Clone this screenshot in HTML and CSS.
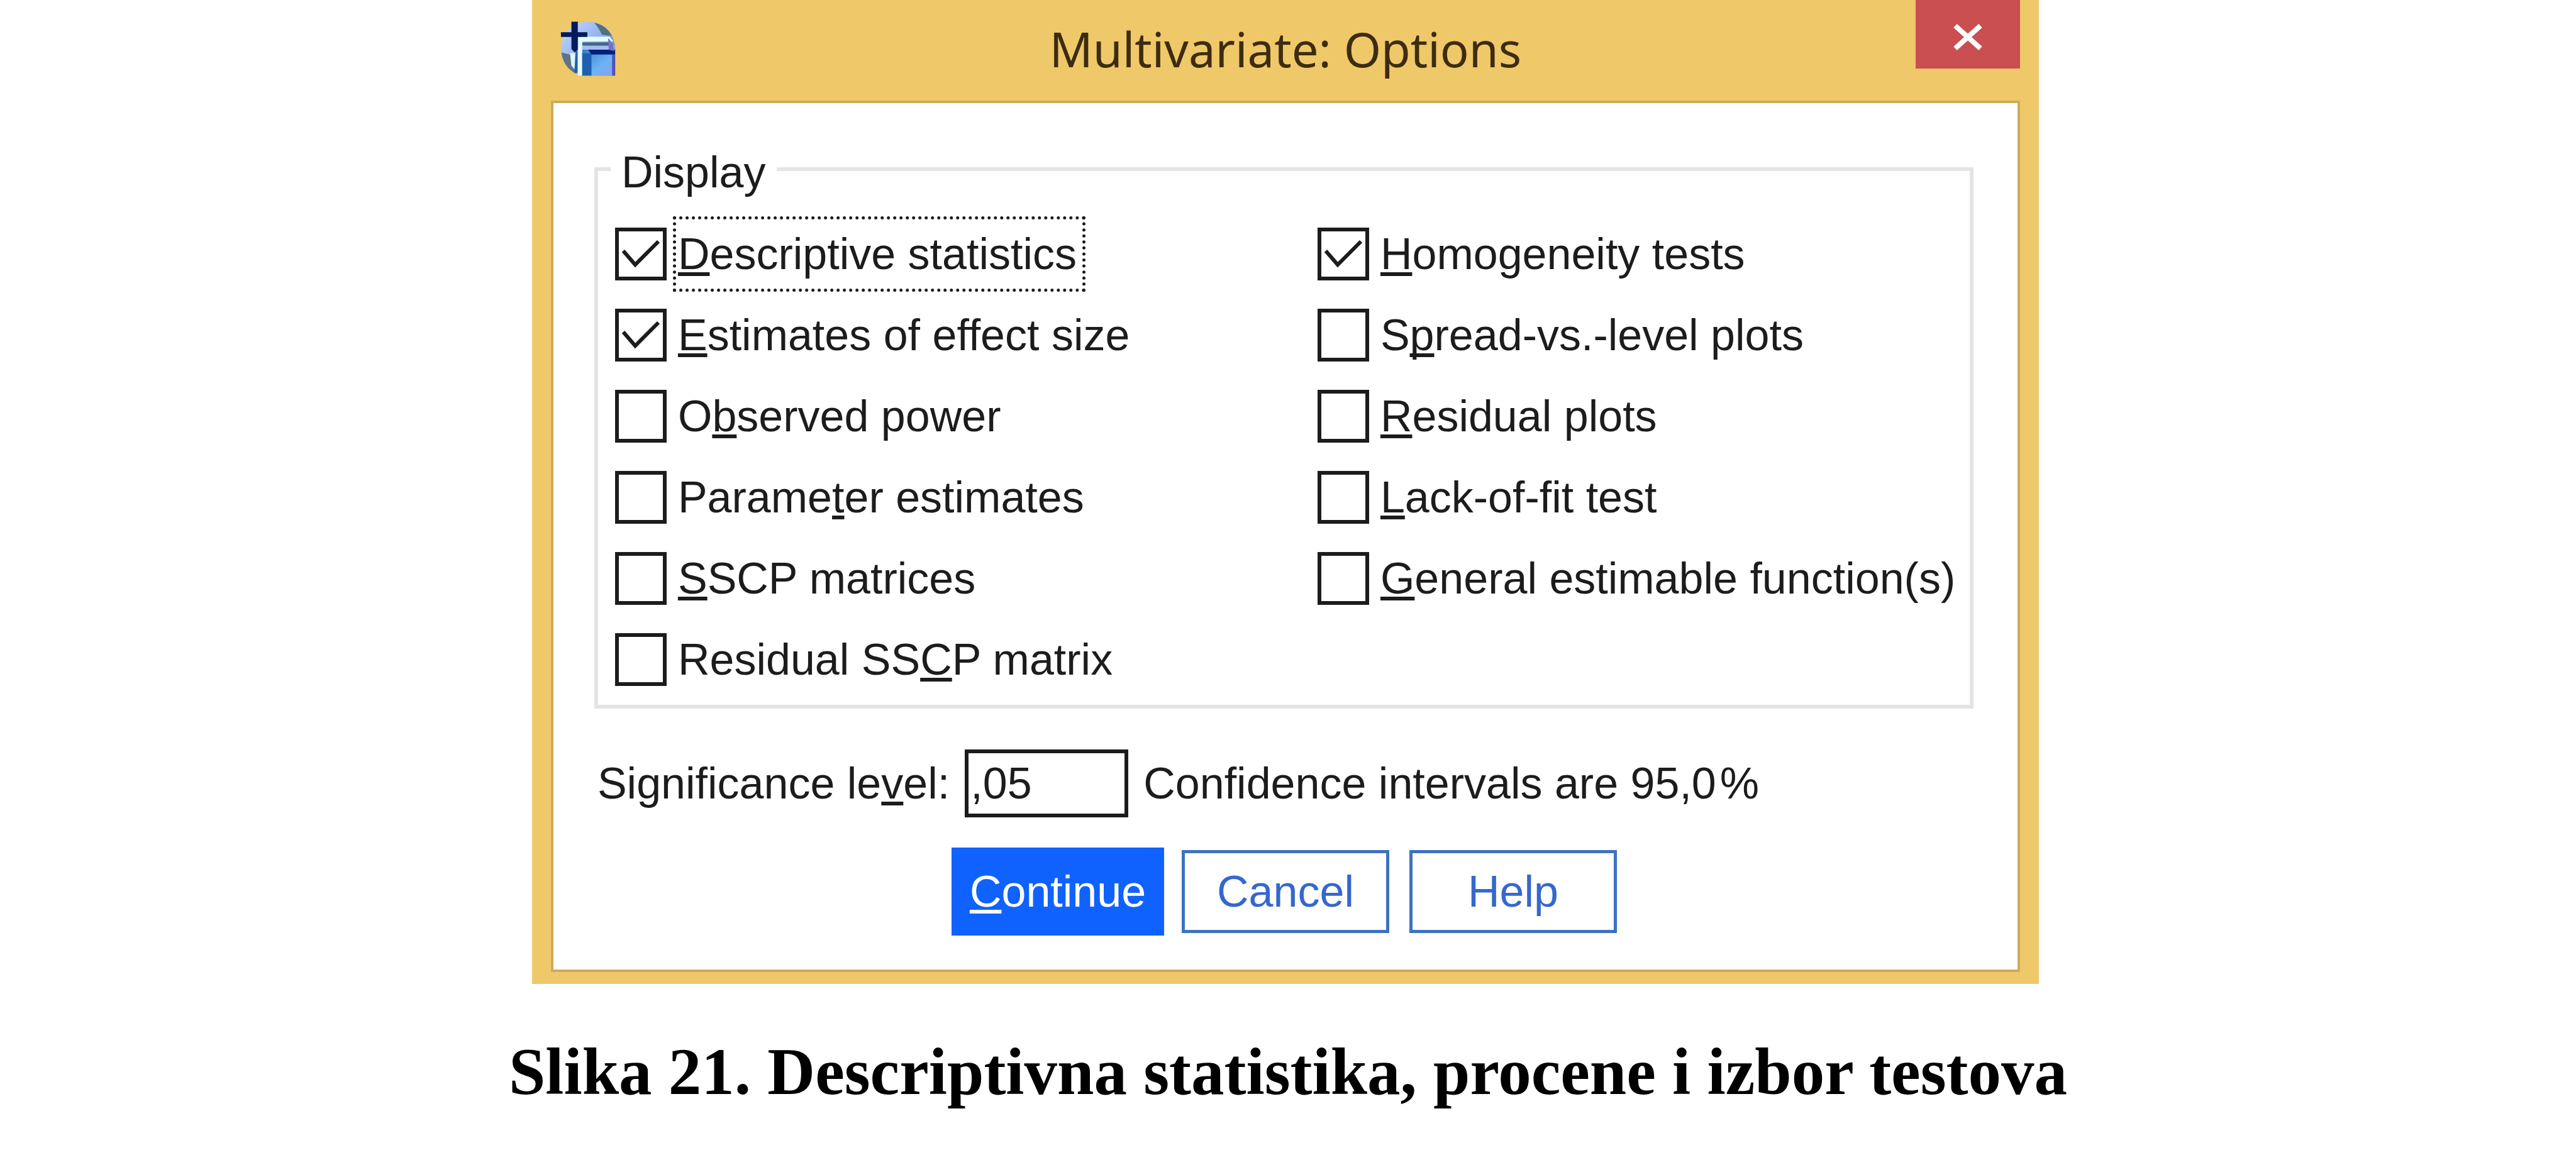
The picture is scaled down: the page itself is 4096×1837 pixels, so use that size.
FILE: index.html
```
<!DOCTYPE html>
<html lang="sr-Latn">
<head>
    <meta charset="UTF-8">
    <meta name="viewport" content="width=device-width, initial-scale=1.0">
    <title>Multivariate: Options</title>
    <link rel="stylesheet" href="styles.css">
</head>
<body>

    <figure class="figure">
        <form class="dialog">
            <header class="titlebar">
                <svg class="app-icon" viewBox="0 0 400 400" aria-hidden="true">
                    <defs>
                        <linearGradient id="disc" x1="0" y1="0" x2="1" y2="1">
                            <stop offset="0" stop-color="#c8dcff"/>
                            <stop offset="0.5" stop-color="#8fb0f2"/>
                            <stop offset="1" stop-color="#4a6a86"/>
                        </linearGradient>
                        <linearGradient id="pane" x1="0" y1="0" x2="1" y2="1">
                            <stop offset="0" stop-color="#3c7cc4"/>
                            <stop offset="0.6" stop-color="#6cb4f4"/>
                            <stop offset="1" stop-color="#8c9cf0"/>
                        </linearGradient>
                    </defs>
                    <path d="M205 2C320 2 396 90 396 205V392H150C60 365 4 290 4 205C4 90 90 2 205 2Z" fill="url(#disc)"/>
                    <path d="M245 10C310 22 350 60 372 105L300 95C285 60 270 40 245 10Z" fill="#52707e"/>
                    <path d="M8 225C16 300 60 350 110 378L70 240Z" fill="#5f7480"/>
                    <path d="M130 110H355L385 145H160V392H125Z" fill="#e4fbff"/>
                    <path d="M70 230H105V350L80 320Z" fill="#dff4ff"/>
                    <path d="M112 215H124V372H100Z" fill="#2a5ea0"/>
                    <path d="M158 152H360V176H158Z" fill="#47687c"/>
                    <path d="M158 176H392V204H158Z" fill="#a6bcf8"/>
                    <path d="M158 204H396V392H158Z" fill="url(#pane)"/>
                    <path d="M158 230H225V392H158Z" fill="#1f5fb0"/>
                    <path d="M200 204H396V240H225Z" fill="#001f7a"/>
                    <path d="M345 120C375 150 388 180 390 215L350 205Z" fill="#7a70c8"/>
                    <path d="M374 240H396V392H374Z" fill="#5250b8"/>
                    <path d="M80 2H126V78H195V112H126V205L105 225L80 200V112H4V78H80Z" fill="#041a5a"/>
                </svg>
                <h1 class="title">Multivariate: Options</h1>
                <button class="close" type="button" aria-label="Close">
                    <svg class="close-icon" viewBox="0 0 46 42" aria-hidden="true">
                        <path d="M3 3L43 39M43 3L3 39" stroke="#fff" stroke-width="8" fill="none"/>
                    </svg>
                </button>
            </header>

            <div class="content">
                <fieldset class="display">
                    <legend>Display</legend>
                    <div class="options">
                        <div class="column">
                            <label class="option"><input type="checkbox" checked><span class="focused"><u>D</u>escriptive statistics</span></label>
                            <label class="option"><input type="checkbox" checked><span><u>E</u>stimates of effect size</span></label>
                            <label class="option"><input type="checkbox"><span>O<u>b</u>served power</span></label>
                            <label class="option"><input type="checkbox"><span>Parame<u>t</u>er estimates</span></label>
                            <label class="option"><input type="checkbox"><span><u>S</u>SCP matrices</span></label>
                            <label class="option"><input type="checkbox"><span>Residual SS<u>C</u>P matrix</span></label>
                        </div>
                        <div class="column">
                            <label class="option"><input type="checkbox" checked><span><u>H</u>omogeneity tests</span></label>
                            <label class="option"><input type="checkbox"><span>S<u>p</u>read-vs.-level plots</span></label>
                            <label class="option"><input type="checkbox"><span><u>R</u>esidual plots</span></label>
                            <label class="option"><input type="checkbox"><span><u>L</u>ack-of-fit test</span></label>
                            <label class="option"><input type="checkbox"><span><u>G</u>eneral estimable function(s)</span></label>
                        </div>
                    </div>
                </fieldset>

                <div class="significance">
                    <label for="level">Significance le<u>v</u>el:</label>
                    <input id="level" class="level" type="text" value=",05">
                    <span class="confidence"><span>Confidence intervals are 95,0</span><span>%</span></span>
                </div>

                <div class="buttons">
                    <button class="btn primary" type="button"><u>C</u>ontinue</button>
                    <button class="btn" type="button">Cancel</button>
                    <button class="btn" type="button">Help</button>
                </div>
            </div>
        </form>
        <figcaption class="caption">Slika 21. Descriptivna statistika, procene i izbor testova</figcaption>
    </figure>

</body>
</html>
```
FILE: styles.css
```
* { margin: 0; padding: 0; box-sizing: border-box; }
body {
    background-color: #fff;
    color: #1c1c1c;
    font-family: "Liberation Sans", Arial, sans-serif;
    font-size: 70px;
    line-height: 84px;
}
input, button { font: inherit; color: inherit; }
u {
    text-decoration-thickness: 6px;
    text-underline-offset: 5px;
    text-decoration-skip-ink: none;
}
.figure {
    display: flex;
    flex-direction: column;
    align-items: center;
}

/* dialog window */
.dialog {
    width: 58.5%;
    margin-right: 8px;
    padding: 0 30px 19px;
    background-color: #efc869;
}
.titlebar {
    display: grid;
    grid-template-columns: 1fr auto 1fr;
    align-items: center;
    height: 160px;
    padding-bottom: 4px;
}
.app-icon { width: 88px; height: 88px; margin-left: 15px; }
.title {
    color: #3d2c10;
    font-family: "Noto Sans", "Open Sans", sans-serif;
    font-size: 76px;
    font-weight: 400;
}
.close {
    display: flex;
    align-self: start;
    justify-self: end;
    justify-content: center;
    align-items: center;
    width: 166px;
    height: 109px;
    padding-top: 8px;
    border: none;
    background-color: #c94f50;
    cursor: pointer;
}
.close-icon { width: 46px; height: 42px; }
.content {
    padding: 60px 70px 58px 65px;
    border: 4px solid #ccab5c;
    background-color: #fff;
}

/* display options */
.display {
    padding: 48px 0 30px 20px;
    border: 6px solid #e4e4e4;
}
.display legend {
    padding: 10px 18px 0 17px;
    line-height: 80px;
}
.options {
    display: grid;
    grid-template-columns: 14fr 13fr;
    padding-left: 7px;
}
.column {
    display: flex;
    flex-direction: column;
    gap: 45px;
}
.option {
    display: flex;
    align-items: center;
    gap: 18px;
    white-space: nowrap;
}
.option input {
    appearance: none;
    flex: none;
    width: 82px;
    height: 84px;
    border: 6px solid #1c1c1c;
    background: #fff center / 100% 100% no-repeat;
    background-origin: border-box;
}
.option input:checked {
    background-image: url("data:image/svg+xml,%3Csvg xmlns='http://www.w3.org/2000/svg' viewBox='0 0 82 84'%3E%3Cpath d='M13 37L32 59L69 22' fill='none' stroke='%231c1c1c' stroke-width='6'/%3E%3C/svg%3E");
}
.focused {
    margin: -10px 0;
    padding: 10px 6px 10px 0;
    outline: 5px dotted #1c1c1c;
    outline-offset: 3px;
}

/* significance level */
.significance {
    display: flex;
    align-items: center;
    gap: 24px;
    margin-top: 65px;
    padding-left: 5px;
    white-space: nowrap;
}
.level {
    width: 260px;
    height: 108px;
    padding-left: 3px;
    border: 6px solid #1c1c1c;
    background-color: #fff;
}
.confidence { display: flex; gap: 6px; }

/* buttons */
.buttons {
    display: flex;
    justify-content: center;
    gap: 32px;
    margin-top: 52px;
    padding-left: 5px;
}
.btn {
    width: 330px;
    height: 132px;
    border: 5px solid #3d72c0;
    background-color: #fff;
    color: #3468cc;
    cursor: pointer;
}
.btn.primary {
    border-color: #0f62fe;
    background-color: #0f62fe;
    box-shadow: 0 0 0 4px #0f62fe;
    color: #fff;
}

.caption {
    margin-top: 80px;
    color: #000;
    font-family: "Liberation Serif", "Times New Roman", serif;
    font-size: 105px;
    font-weight: 700;
    line-height: 120px;
    text-align: center;
}
```
